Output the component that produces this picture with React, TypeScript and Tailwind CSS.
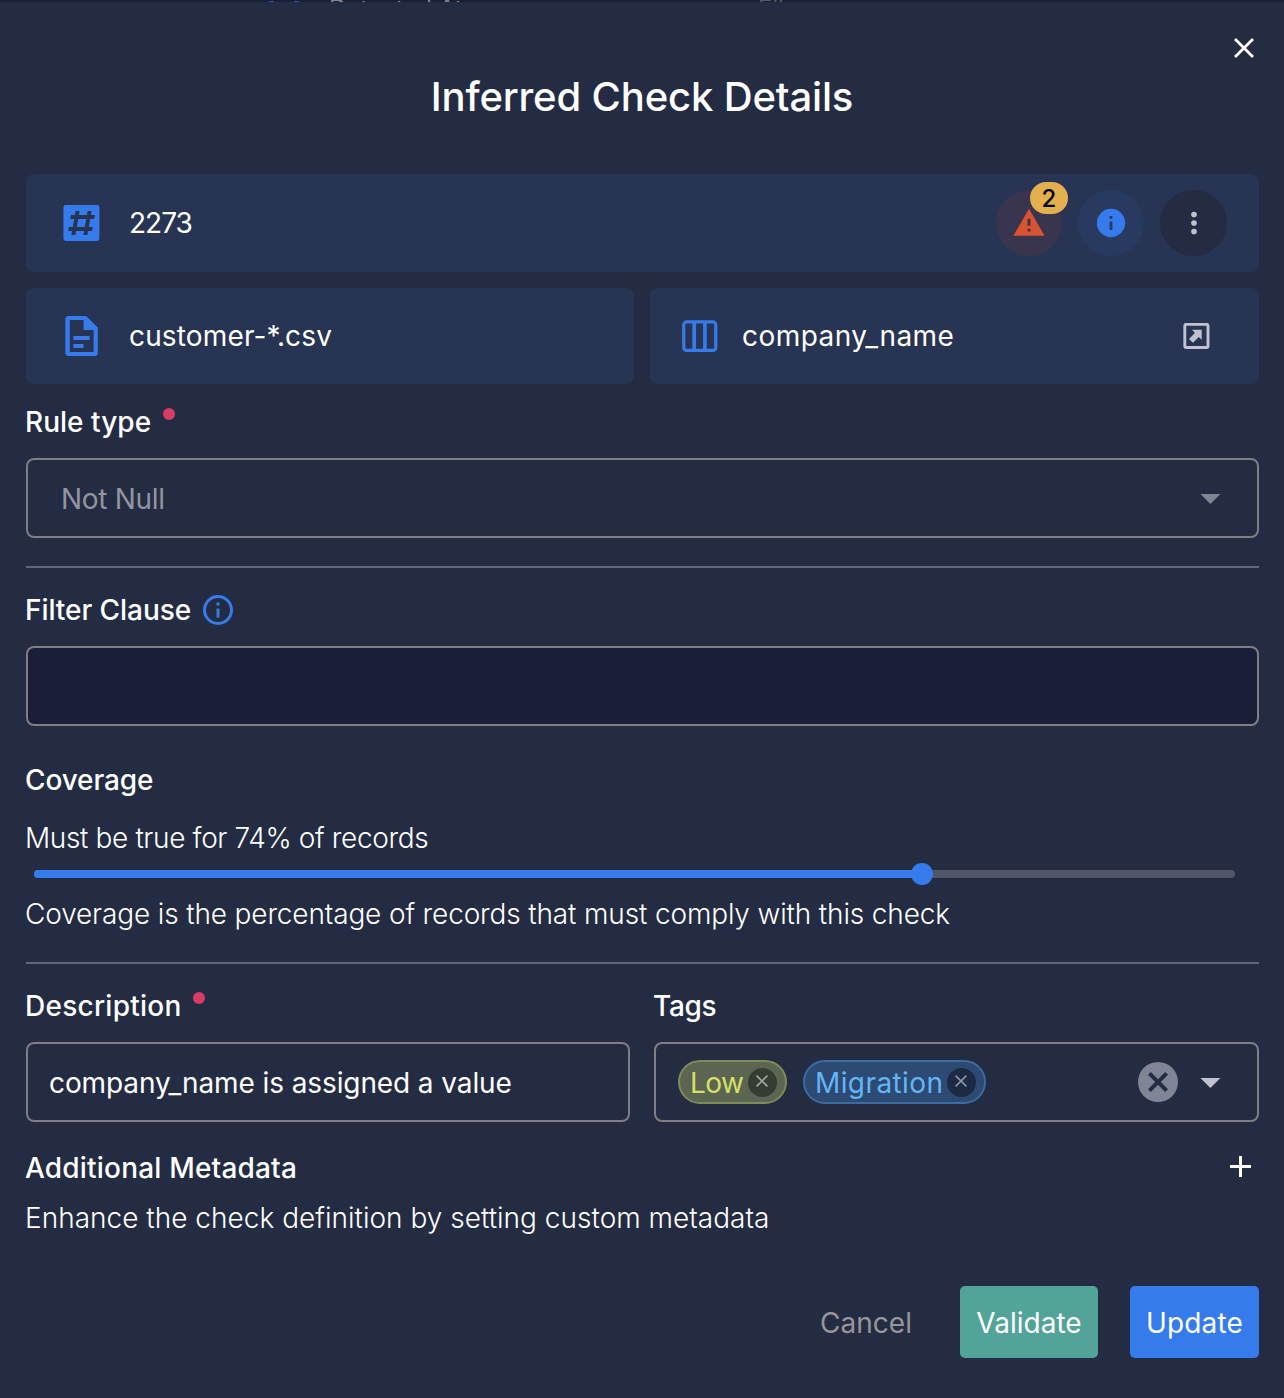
import type { ReactNode } from "react";

function Icon({ d, className }: { d: string; className: string }) {
  return (
    <svg viewBox="0 0 24 24" fill="currentColor" fillRule="evenodd" className={`block shrink-0 ${className}`}>
      <path d={d} />
    </svg>
  );
}

const ICONS = {
  pound:
    "M3.2 4.2V19.8A1.2 1.2 0 0 0 4.4 21H20A1.2 1.2 0 0 0 21.2 19.8V4.2A1.2 1.2 0 0 0 20 3H4.4A1.2 1.2 0 0 0 3.2 4.2M7.2 18H9.2L9.55 16H13.55L13.2 18H15.2L15.55 16H17.55L17.91 14H15.91L16.61 10H18.61L18.96 8H16.96L17.32 6H15.32L14.96 8H10.96L11.32 6H9.32L8.96 8H6.96L6.61 10H8.61L7.91 14H5.91L5.55 16H7.55L7.2 18M10.61 10H14.61L13.91 14H9.91L10.61 10",
  file: "M5.8 2H14.6L20.4 7.8V20.5A1.5 1.5 0 0 1 18.9 22H5.7A1.5 1.5 0 0 1 4.2 20.5V3.6A1.6 1.6 0 0 1 5.8 2M6.4 4V20H18.3V9H13.3V4ZM8.2 12H16.3V14H8.2ZM8.2 16H13.3V18H8.2Z",
  alert: "M13 14H11V9H13M13 18H11V16H13M1 21H23L12 2L1 21Z",
  info: "M13 9H11V7H13M13 17H11V11H13M12 2A10 10 0 1 0 12 22A10 10 0 1 0 12 2Z",
  infoOutline:
    "M11 9H13V7H11M12 20A8 8 0 1 1 12 4A8 8 0 1 1 12 20M12 2A10 10 0 1 0 12 22A10 10 0 1 0 12 2M11 17H13V11H11V17Z",
  dots: "M12 16A2 2 0 1 1 12 20A2 2 0 1 1 12 16M12 10A2 2 0 1 1 12 14A2 2 0 1 1 12 10M12 4A2 2 0 1 1 12 8A2 2 0 1 1 12 4Z",
  caret: "M7.2 10L12.2 15L17.2 10H7.2Z",
  clear:
    "M12 2A10 10 0 1 0 12 22A10 10 0 1 0 12 2M17 15.59L15.59 17L12 13.41L8.41 17L7 15.59L10.59 12L7 8.41L8.41 7L12 10.59L15.59 7L17 8.41L13.41 12L17 15.59Z",
};

function ColumnsIcon() {
  return (
    <svg viewBox="0 0 36 32" className="block h-8 w-9 shrink-0 text-[#367bec]" fill="none" stroke="currentColor">
      <rect x="1.75" y="1.95" width="32" height="28.5" rx="2.8" strokeWidth="3.2" />
      <path d="M12.2 2V30M22.9 2V30" strokeWidth="3.7" />
    </svg>
  );
}

function OpenIcon() {
  return (
    <svg viewBox="0 0 27 27" className="block size-[27px] shrink-0 text-[#c0c3ce]">
      <rect x="1.8" y="1.3" width="23.2" height="23.2" rx="1.6" fill="none" stroke="currentColor" strokeWidth="2.9" />
      <path d="M9 6.8H18.7V16.8L15.8 13.9L10 19.7L6 15.9L11.9 10Z" fill="currentColor" />
    </svg>
  );
}

function Cross({ className, width }: { className: string; width: number }) {
  return (
    <svg viewBox="0 0 20 20" className={`block shrink-0 ${className}`} stroke="currentColor" strokeWidth={width}>
      <path d="M1 1L19 19M19 1L1 19" />
    </svg>
  );
}

function Label({ children, required, className }: { children: ReactNode; required?: boolean; className: string }) {
  return (
    <div className="-ml-px flex h-9 items-center">
      <span className={`font-medium ${className}`}>{children}</span>
      {required && <span className="mb-4 ml-[11px] size-3 rounded-full bg-[#d83b63]" />}
    </div>
  );
}

function Chip({ label, chip, button, text }: { label: string; chip: string; button: string; text: string }) {
  return (
    <div className={`flex h-11 items-center justify-between rounded-full border-2 pl-2.5 pr-2 ${chip}`}>
      <span className={`pt-0.5 ${text}`}>{label}</span>
      <span className={`-ml-2 flex size-[29px] shrink-0 items-center justify-center rounded-full pb-0.5 pr-px ${button}`}>
        <Cross className="size-3" width={2.6} />
      </span>
    </div>
  );
}

export default function App() {
  return (
    <div className="flex h-[1398px] w-[1284px] flex-col overflow-hidden whitespace-nowrap bg-[#242c43] font-['Inter',sans-serif] text-[28px] leading-9 text-white">
      <div className="relative h-0.5 shrink-0 overflow-hidden bg-[#191f34] text-2xl leading-6 text-[#83868f]">
        <span className="absolute left-[269px] top-px h-px w-[5px] bg-[#2d559b]" />
        <span className="absolute left-[294px] top-px h-px w-[5px] bg-[#2d559b]" />
        <span className="absolute -top-[3px] left-[329px]">Detected At</span>
        <span className="absolute -top-[3px] left-[758px] text-[#555a6b]">File</span>
      </div>

      <header className="h-[172px] shrink-0 px-[30px] pt-9">
        <button className="ml-auto block">
          <Cross className="size-[20px]" width={2.8} />
        </button>
        <h1 className="mt-[15px] text-center text-[40px] font-medium leading-[48px] tracking-[-0.15px]">
          Inferred Check Details
        </h1>
      </header>

      <main className="flex flex-col pl-[26px] pr-[25px]">
        <section className="grid grid-cols-[608px_609px] gap-4">
          <div className="col-span-2 flex h-[98px] items-center rounded-lg bg-[#273453] pl-[31px] pr-8">
            <Icon d={ICONS.pound} className="size-12 text-[#367bec]" />
            <span className="ml-6 tracking-[-1px]">2273</span>
            <div className="ml-auto flex gap-4">
              <div className="relative flex size-[66px] items-center justify-center rounded-full bg-[#3a354e]">
                <Icon d={ICONS.alert} className="mr-px size-[34px] text-[#d95331]" />
                <span className="absolute -top-2 left-[34px] flex h-8 w-[38px] items-center justify-center rounded-full bg-[#e2b04f] pt-0.5 text-2xl font-medium text-black">
                  2
                </span>
              </div>
              <div className="flex size-[66px] items-center justify-center rounded-full bg-[#293a60]">
                <Icon d={ICONS.info} className="size-[34px] text-[#367bec]" />
              </div>
              <div className="flex h-[66px] w-[67px] items-center justify-center rounded-full bg-[#242c43]">
                <Icon d={ICONS.dots} className="size-[34px] text-[#c0c3ce]" />
              </div>
            </div>
          </div>
          <div className="flex h-24 items-center rounded-lg bg-[#273453] pl-[31px]">
            <Icon d={ICONS.file} className="size-12 text-[#367bec]" />
            <span className="ml-6 tracking-[0.15px]">customer-*.csv</span>
          </div>
          <div className="flex h-24 items-center rounded-lg bg-[#273453] pl-8 pr-[49px]">
            <ColumnsIcon />
            <span className="ml-6 mr-auto tracking-[0.45px]">company_name</span>
            <OpenIcon />
          </div>
        </section>

        <section className="mt-5 border-b-2 border-[#62667a] pb-7">
          <Label required className="mr-px tracking-[0.02px]">Rule type</Label>
          <div className="mt-[18px] flex h-20 items-center rounded-lg border-2 border-[#7f7e82] pl-[33px] pr-[23px] text-[#9295a0]">
            <span className="mr-auto pt-0.5 tracking-[-0.3px]">Not Null</span>
            <Icon d={ICONS.caret} className="size-12 text-[#7f8595]" />
          </div>
        </section>

        <section className="mt-6">
          <div className="flex h-9 items-center">
            <Label className="tracking-[-0.06px]">Filter Clause</Label>
            <Icon d={ICONS.infoOutline} className="ml-[9px] size-9 text-[#367bec]" />
          </div>
          <div className="mt-[18px] h-20 rounded-lg border-2 border-[#7f7e82] bg-[#1b1e38]" />
        </section>

        <section className="mt-9 border-b-2 border-[#62667a] pb-[30px]">
          <Label className="tracking-[-0.13px]">Coverage</Label>
          <p className="-ml-px mt-[22px] font-light tracking-[-0.37px]">Must be true for 74% of records</p>
          <div className="ml-2 mr-6 mt-[14px] h-2 rounded-full bg-[#52566a]">
            <div className="flex h-2 w-[899px] items-center justify-end rounded-full">
              <div className="-mr-[11px] h-2 w-[888px] rounded-l-full bg-[#367bec]" />
              <div className="size-[22px] shrink-0 rounded-full bg-[#367bec]" />
            </div>
          </div>
          <p className="-ml-px mt-[18px] font-light tracking-[-0.145px]">
            Coverage is the percentage of records that must comply with this check
          </p>
        </section>

        <section className="mt-6 grid grid-cols-[604px_605px] gap-6">
          <div>
            <Label required className="tracking-[0.25px]">Description</Label>
            <div className="mt-[18px] flex h-20 items-center rounded-lg border-2 border-[#7f7e82] pl-[21px] pt-0.5 tracking-[-0.1px]">
              company_name is assigned a value
            </div>
          </div>
          <div>
            <Label className="tracking-[-0.3px]">Tags</Label>
            <div className="mt-[18px] flex h-20 items-center rounded-lg border-2 border-[#7f7e82] pl-[22px] pr-[23px]">
              <Chip
                label="Low"
                chip="w-[109px] border-[#7f8a58] bg-[#5c6551] text-[#d5e067]"
                button="bg-[#353c31] text-[#a9ada0]"
                text="tracking-[-0.56px]"
              />
              <div className="w-4" />
              <Chip
                label="Migration"
                chip="w-[183px] border-[#3c6b9f] bg-[#2c4a72] text-[#64b5f6]"
                button="bg-[#1c2b43] text-[#8b97a8]"
                text="tracking-[0.4px]"
              />
              <Icon d={ICONS.clear} className="ml-auto mr-1 size-12 text-[#7f8595]" />
              <Icon d={ICONS.caret} className="size-12 text-[#c0c3ce]" />
            </div>
          </div>
        </section>

        <section className="mt-7">
          <div className="flex items-center justify-between pr-2">
            <Label className="tracking-[0.19px]">Additional Metadata</Label>
            <svg viewBox="0 0 21 21" className="mb-[3px] block size-[21px]" stroke="currentColor" strokeWidth="3">
              <path d="M10.5 0V21M0 10.5H21" />
            </svg>
          </div>
          <p className="-ml-px mt-[14px] font-light tracking-[0.015px]">
            Enhance the check definition by setting custom metadata
          </p>
        </section>

        <footer className="mt-[50px] flex h-[72px] items-center justify-end">
          <button className="mr-12 pt-0.5 tracking-[0.05px] text-[#969698]">Cancel</button>
          <button className="mr-8 h-[72px] w-[138px] rounded-[5px] bg-[#52a398] pt-0.5">Validate</button>
          <button className="h-[72px] w-[129px] rounded-[5px] bg-[#367bec] pt-0.5 tracking-[0.15px]">Update</button>
        </footer>
      </main>
    </div>
  );
}
